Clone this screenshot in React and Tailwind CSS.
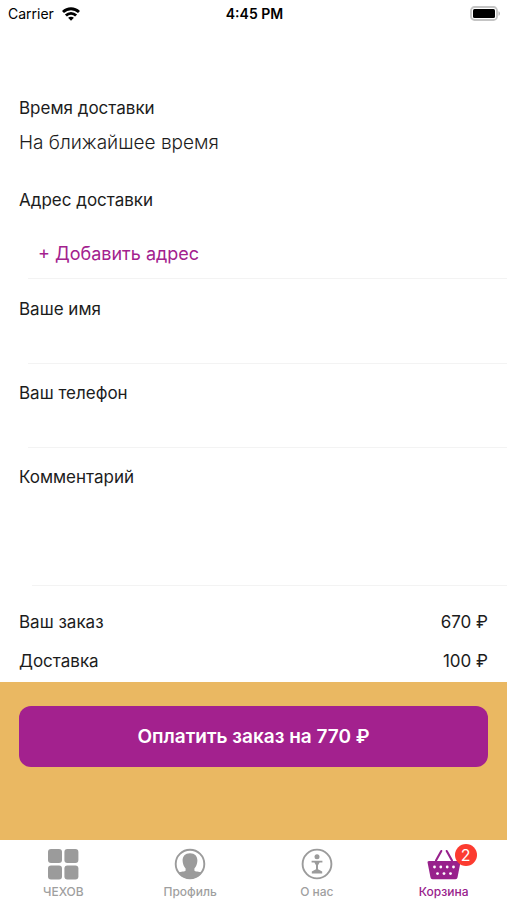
import React, { useState } from "react";

const WifiIcon = () => (
  <svg viewBox="0 0 18 14" className="w-[18px] h-[14px]" fill="none" stroke="#000" strokeWidth="2.9" aria-hidden="true">
    <path d="M1 5C5.6 0.7 12.4 0.7 17 5" />
    <path d="M3.9 8.5C6.8 5.7 11.2 5.7 14.1 8.5" />
    <path d="M9 13.8L6.1 10.8C7.7 9.3 10.3 9.3 11.9 10.8Z" fill="#000" stroke="none" />
  </svg>
);

const BatteryIcon = () => (
  <svg viewBox="0 0 31 15" className="w-[31px] h-[15px]" aria-hidden="true">
    <rect x="1" y="1" width="26" height="13" rx="3.5" fill="#fff" stroke="#c4c4c4" strokeWidth="1.8" />
    <rect x="3" y="3" width="22" height="9" rx="1.5" fill="#000" />
    <path d="M28.5 5.2C30.4 5.8 30.4 9.2 28.5 9.8Z" fill="#b5b5b5" />
  </svg>
);

const GridIcon = () => (
  <svg viewBox="0 0 32 32" className="size-8" fill="#9b9b9b" aria-hidden="true">
    <rect x="1" y="1" width="14" height="14" rx="3" />
    <rect x="17.4" y="1" width="14" height="14" rx="3" />
    <rect x="1" y="17.4" width="14" height="14" rx="3" />
    <rect x="17.4" y="17.4" width="14" height="14" rx="3" />
  </svg>
);

const ProfileIcon = () => (
  <svg viewBox="0 0 32 32" className="size-8" fill="#9b9b9b" aria-hidden="true">
    <circle cx="16" cy="16" r="14.3" fill="none" stroke="#9b9b9b" strokeWidth="1.9" />
    <path d="M16 5.2C20.9 5.2 23.5 8.2 23.4 12.7C23.3 16 22 18.8 20.4 20.6V22.4C21 23.8 25 23.2 27.8 24.4C24.8 28.6 20.5 30.8 16 30.8C11.5 30.8 7.2 28.6 4.2 24.4C7 23.2 11 23.8 11.6 22.4V20.6C10 18.8 8.7 16 8.6 12.7C8.5 8.2 11.1 5.2 16 5.2Z" />
  </svg>
);

const AboutIcon = () => (
  <svg viewBox="0 0 32 32" className="size-8" fill="#9b9b9b" aria-hidden="true">
    <circle cx="16" cy="16" r="14.4" fill="none" stroke="#9b9b9b" strokeWidth="1.9" />
    <circle cx="16" cy="8.8" r="2.5" />
    <path d="M10.6 12.8H21.4V14.6H18.6L17 17.2V21.2L21.2 23.6V25.4H10.8V23.6L15 21.2V17.2L13.4 14.6H10.6Z" />
  </svg>
);

const BasketIcon = () => (
  <svg viewBox="0 0 34 32" className="w-[34px] h-8" fill="#98218c" aria-hidden="true">
    <path d="M9 12.5L14.3 3M25 12.5L19.7 3" fill="none" stroke="#98218c" strokeWidth="2.1" strokeLinecap="round" />
    <path d="M2 13H32C33.2 13 33.6 13.8 33.4 14.8L30.6 29C30.3 30.5 29.6 31.2 28.4 31.2H5.6C4.4 31.2 3.7 30.5 3.4 29L0.6 14.8C0.4 13.8 0.8 13 2 13Z" />
    <g fill="#fff">
      <circle cx="7.5" cy="19" r="1.4" />
      <circle cx="13.8" cy="19" r="1.4" />
      <circle cx="20.2" cy="19" r="1.4" />
      <circle cx="26.5" cy="19" r="1.4" />
      <circle cx="10.5" cy="25.6" r="1.4" />
      <circle cx="17" cy="25.6" r="1.4" />
      <circle cx="23.5" cy="25.6" r="1.4" />
    </g>
  </svg>
);

const tabs = [
  { id: "menu", label: "ЧЕХОВ", Icon: GridIcon },
  { id: "profile", label: "Профиль", Icon: ProfileIcon },
  { id: "about", label: "О нас", Icon: AboutIcon },
  { id: "cart", label: "Корзина", Icon: BasketIcon, badge: 2 },
];

const App = () => {
  const [name, setName] = useState("");
  const [phone, setPhone] = useState("");
  const [comment, setComment] = useState("");
  const [activeTab, setActiveTab] = useState("cart");

  const handleSubmit = (e) => e.preventDefault();

  return (
    <div className="flex flex-col min-h-screen bg-white text-[#1c1c1c] text-[17px] leading-6 font-['Inter','Liberation_Sans',sans-serif]">
      <header className="grid grid-cols-3 items-center h-[27px] pl-2 pr-1.5 text-sm text-black">
        <div className="flex items-center gap-2">
          <span>Carrier</span>
          <WifiIcon />
        </div>
        <span className="text-center font-semibold">4:45 PM</span>
        <div className="flex justify-end">
          <BatteryIcon />
        </div>
      </header>

      <form onSubmit={handleSubmit} className="flex flex-col grow">
        <section className="px-[19px] pt-[69px]">
          <h2>Время доставки</h2>
          <p className="mt-[9px] text-[19px] leading-7 font-light">На ближайшее время</p>
        </section>

        <section className="pt-[31px]">
          <h2 className="px-[19px]">Адрес доставки</h2>
          <div className="ml-7 mt-6 h-[43px] border-b border-[#f3f3f3]">
            <button type="button" className="ml-2.5 mt-1 text-[18px] leading-7 text-[#a3218e]">+ Добавить адрес</button>
          </div>
        </section>

        <div className="pt-[18px]">
          <label htmlFor="name" className="block px-[19px]">Ваше имя</label>
          <input
            id="name"
            type="text"
            value={name}
            onChange={(e) => setName(e.target.value)}
            className="block w-full pl-[19px] h-[42px] focus:outline-none"
          />
          <div className="ml-7 border-b border-[#f3f3f3]" />
        </div>

        <div className="pt-[17px]">
          <label htmlFor="phone" className="block px-[19px]">Ваш телефон</label>
          <input
            id="phone"
            type="tel"
            value={phone}
            onChange={(e) => setPhone(e.target.value)}
            className="block w-full pl-[19px] h-[42px] focus:outline-none"
          />
          <div className="ml-7 border-b border-[#f3f3f3]" />
        </div>

        <div className="pt-[17px]">
          <label htmlFor="comment" className="block px-[19px]">Комментарий</label>
          <textarea
            id="comment"
            value={comment}
            onChange={(e) => setComment(e.target.value)}
            className="block w-full pl-[19px] h-24 resize-none focus:outline-none"
          />
          <div className="ml-8 border-b border-[#f3f3f3]" />
        </div>

        <dl className="flex flex-col gap-[15px] px-[19px] pt-6 pb-[9px]">
          <div className="flex justify-between">
            <dt>Ваш заказ</dt>
            <dd>670 ₽</dd>
          </div>
          <div className="flex justify-between">
            <dt>Доставка</dt>
            <dd>100 ₽</dd>
          </div>
        </dl>

        <div className="grow px-[19px] pt-6 pb-18 bg-[#eab862]">
          <button type="submit" className="w-full h-[61px] rounded-xl bg-[#a3218e] text-white text-[19px] font-semibold">
            Оплатить заказ на 770 ₽
          </button>
        </div>
      </form>

      <nav className="grid grid-cols-4 h-[60px] pt-2 bg-white">
        {tabs.map(({ id, label, Icon, badge }) => (
          <button
            key={id}
            type="button"
            onClick={() => setActiveTab(id)}
            className={`flex flex-col items-center gap-1 text-xs leading-4 font-medium ${activeTab === id ? "text-[#98218c]" : "text-[#9f9f9f]"}`}
          >
            <span className="relative">
              <Icon />
              {badge && (
                <span className="absolute -top-1 left-7 flex items-center justify-center size-[22px] rounded-full bg-[#fc3b30] text-white text-base font-normal">
                  {badge}
                </span>
              )}
            </span>
            {label}
          </button>
        ))}
      </nav>
    </div>
  );
};

export default App;
